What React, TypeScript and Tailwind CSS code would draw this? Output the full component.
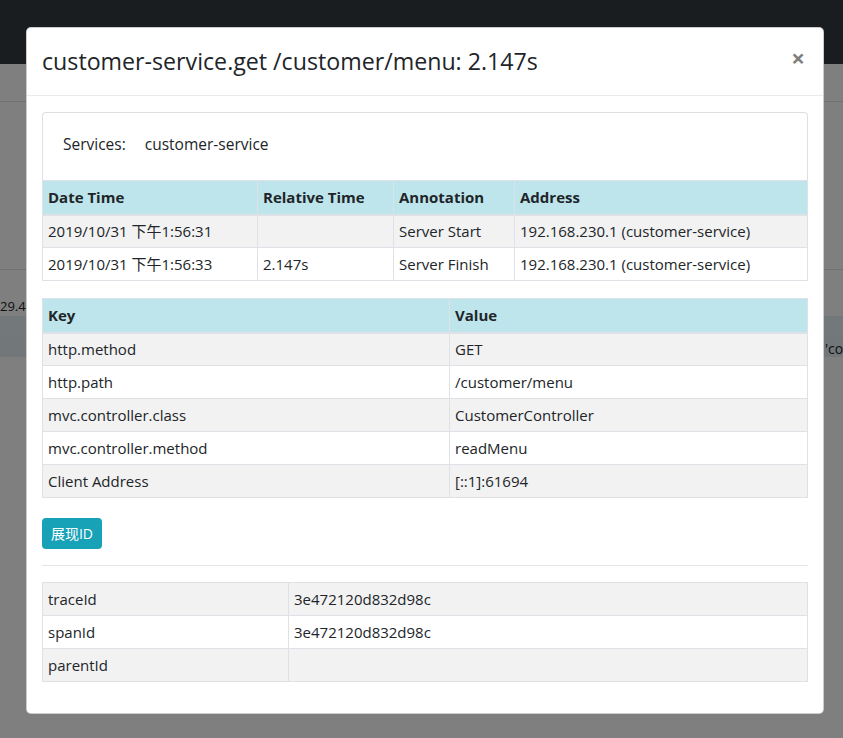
import React from "react"

const font = "font-['Open_Sans','Noto_Sans_CJK_SC',sans-serif]"

const cell = "border border-[#dee2e6] px-[5px] py-0 h-[33px] text-left font-normal align-middle"
const head = "border border-[#dee2e6] border-b-2 px-[5px] py-0 h-[34px] text-left font-bold align-middle"

const annotations = [
    ["2019/10/31 下午1:56:31", "", "Server Start", "192.168.230.1 (customer-service)"],
    ["2019/10/31 下午1:56:33", "2.147s", "Server Finish", "192.168.230.1 (customer-service)"],
]

const tags = [
    ["http.method", "GET"],
    ["http.path", "/customer/menu"],
    ["mvc.controller.class", "CustomerController"],
    ["mvc.controller.method", "readMenu"],
    ["Client Address", "[::1]:61694"],
]

const ids = [
    ["traceId", "3e472120d832d98c"],
    ["spanId", "3e472120d832d98c"],
    ["parentId", ""],
]

// page behind the modal, mostly hidden by the backdrop
const Background = () => (
    <div className="w-full">
        <div className="h-[64px] bg-[#343a40]" />
        <div className="h-[38px] border-b border-[#e0e0e0]" />
        <div className="h-[168px] border-b border-[#e0e0e0]" />
        <div className="h-[46px] pt-[26px]">
            <span className="block w-[26px] overflow-hidden whitespace-nowrap text-[13px] leading-[20px] text-[#212529]">29.431</span>
        </div>
        <div className="h-[21px] bg-[#e6f2f7]" />
        <div className="h-[20px] flex justify-end bg-[#e4eef2]">
            <span className="text-[14px] leading-[20px] pt-[2px] text-[#212529] w-[18px] overflow-hidden whitespace-nowrap">'cof</span>
        </div>
    </div>
)

export default function App() {
    return (
        <div className={`relative w-[843px] h-[738px] overflow-hidden bg-white ${font}`}>
            <Background />

            <div className="absolute inset-0 bg-black/50 pl-[26px] pt-[27px]">
                <div className="w-[798px] bg-white rounded-[5px] border border-black/20 text-[#212529]">
                    <div className="flex items-start justify-between h-[68px] px-[15px] border-b border-[#e9ecef]">
                        <h4 className="mt-[15px] text-[23.2px] leading-[36px] font-medium">
                            customer-service.get /customer/menu: 2.147s
                        </h4>
                        <button className="mt-[18px] mr-[3px] text-[24px] leading-[24px] font-bold text-black opacity-50">×</button>
                    </div>

                    <div className="px-[15px] py-4">
                        <div className="h-[68px] flex items-start pt-[19px] px-5 border border-black/[0.125] rounded-t-[4px] border-b-0 text-[15.5px] leading-[24px] font-medium">
                            <span>Services:</span>
                            <span className="ml-[19px]">customer-service</span>
                        </div>

                        <table className="w-full table-fixed border-collapse text-[15px]">
                            <colgroup>
                                <col className="w-[215px]" />
                                <col className="w-[136px]" />
                                <col className="w-[121px]" />
                                <col />
                            </colgroup>
                            <thead>
                                <tr className="bg-[#bee5eb]">
                                    <th className={head}>Date Time</th>
                                    <th className={head}>Relative Time</th>
                                    <th className={head}>Annotation</th>
                                    <th className={head}>Address</th>
                                </tr>
                            </thead>
                            <tbody>
                                {annotations.map((row, i) => (
                                    <tr key={i} className={i % 2 === 0 ? "bg-[#f2f2f2]" : "bg-white"}>
                                        {row.map((v, j) => <td key={j} className={cell}>{v}</td>)}
                                    </tr>
                                ))}
                            </tbody>
                        </table>

                        <table className="w-full table-fixed border-collapse text-[15px] mt-[17px]">
                            <colgroup>
                                <col className="w-[407px]" />
                                <col />
                            </colgroup>
                            <thead>
                                <tr className="bg-[#bee5eb]">
                                    <th className={head}>Key</th>
                                    <th className={head}>Value</th>
                                </tr>
                            </thead>
                            <tbody>
                                {tags.map((row, i) => (
                                    <tr key={i} className={i % 2 === 0 ? "bg-[#f2f2f2]" : "bg-white"}>
                                        {row.map((v, j) => <td key={j} className={cell}>{v}</td>)}
                                    </tr>
                                ))}
                            </tbody>
                        </table>

                        <button className="mt-[20px] h-[31px] w-[60px] rounded-[4px] bg-[#17a2b8] text-white text-[14px] flex items-center justify-center">
                            展现ID
                        </button>

                        <hr className="mt-[16px] mb-[16px] border-0 border-t border-black/10" />

                        <table className="w-full table-fixed border-collapse text-[15px] mb-[15px]">
                            <colgroup>
                                <col className="w-[246px]" />
                                <col />
                            </colgroup>
                            <tbody>
                                {ids.map((row, i) => (
                                    <tr key={i} className={i % 2 === 0 ? "bg-[#f2f2f2]" : "bg-white"}>
                                        {row.map((v, j) => <td key={j} className={cell}>{v}</td>)}
                                    </tr>
                                ))}
                            </tbody>
                        </table>
                    </div>
                </div>
            </div>
        </div>
    )
}
